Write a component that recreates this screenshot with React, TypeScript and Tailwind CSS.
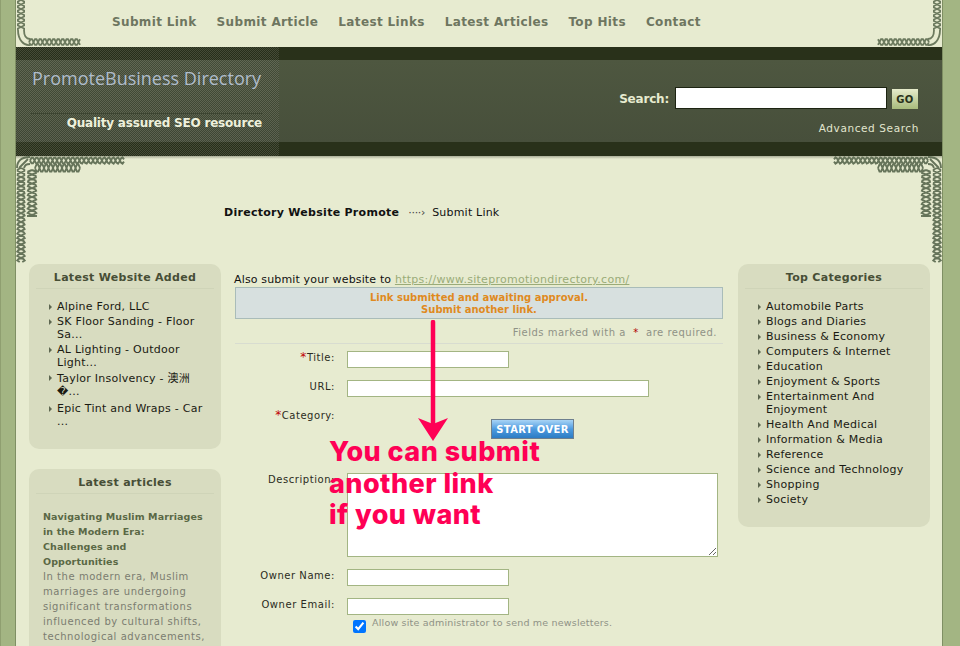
import React from "react";

function braid(x1: number, y1: number, x2: number, y2: number, amp: number, wave: number) {
  const len = Math.hypot(x2 - x1, y2 - y1);
  const ux = (x2 - x1) / len, uy = (y2 - y1) / len;
  const nx = -uy, ny = ux;
  const build = (sign: number) => {
    let d = "";
    const steps = Math.max(8, Math.round(len / 1.5));
    for (let i = 0; i <= steps; i++) {
      const t = (i / steps) * len;
      const o = Math.sin((t / wave) * Math.PI * 2) * amp * sign;
      const px = x1 + ux * t + nx * o, py = y1 + uy * t + ny * o;
      d += (i ? "L" : "M") + px.toFixed(1) + " " + py.toFixed(1);
    }
    return d;
  };
  return build(1) + build(-1);
}

function TopKnot({ flip }: { flip?: boolean }) {
  return (
    <svg width="66" height="47" viewBox="0 0 66 47" className={flip ? "absolute top-0 right-0 -scale-x-100" : "absolute top-0 left-0"}>
      <g fill="none" stroke="#6c7a5e" strokeWidth="1.8">
        <path d={braid(5, 0, 5, 30, 3.6, 9)} />
        <path d={braid(13, 42, 64, 42, 3.2, 9)} />
        <path d="M2 30 C2 40 8 46 14 45 M8 30 C8 36 10 39 14 39" />
      </g>
    </svg>
  );
}

function BottomKnot({ flip }: { flip?: boolean }) {
  return (
    <svg width="110" height="108" viewBox="0 0 110 108" className={flip ? "absolute top-0 right-0 -scale-x-100" : "absolute top-0 left-0"}>
      <g fill="none" stroke="#66745a" strokeWidth="1.9">
        <path d={braid(5, 12, 5, 106, 3.8, 9)} />
        <path d={braid(16, 14, 16, 60, 4.4, 9)} />
        <path d={braid(14, 4.5, 108, 4.5, 3.2, 9)} />
        <path d={braid(19, 12, 64, 12, 4, 9)} />
        <path d="M1 12 C1 5 5 1 14 1 M3 12 L12 3 M8 12 C9 9 10 8 14 8" />
        <path d="M11 60 L21 60" />
      </g>
    </svg>
  );
}

function Caret() {
  return <span className="absolute left-[-8px] top-[4px] w-0 h-0 border-y-[3px] border-y-transparent border-l-[3px] border-l-[#5d6650]" />;
}

function Panel({ title, children, className }: { title: string; children: React.ReactNode; className: string }) {
  return (
    <div className={"w-[192px] rounded-[10px] bg-[#d8dcc0] " + className}>
      <h3 className="mx-[7px] h-[25px] border-b border-[#cfd4b8] pt-[6px] text-center text-[11px] leading-[15px] font-bold tracking-[0.3px] text-[#474e36]">{title}</h3>
      {children}
    </div>
  );
}

const latest = [
  ["Alpine Ford, LLC"],
  ["SK Floor Sanding - Floor", "Sa..."],
  ["AL Lighting - Outdoor", "Light..."],
  ["Taylor Insolvency - 澳洲", "�..."],
  ["Epic Tint and Wraps - Car", "..."],
];

const cats = [
  ["Automobile Parts"], ["Blogs and Diaries"], ["Business & Economy"], ["Computers & Internet"], ["Education"],
  ["Enjoyment & Sports"], ["Entertainment And", "Enjoyment"], ["Health And Medical"], ["Information & Media"],
  ["Reference"], ["Science and Technology"], ["Shopping"], ["Society"],
];

function Links({ items }: { items: string[][] }) {
  return (
    <ul className="ml-[28px] mt-[11px] text-[11px] tracking-[0.25px] text-[#1a1a12]">
      {items.map((it) => (
        <li key={it[0]} className={"relative leading-[13px] " + (it[0].startsWith("Taylor") ? "pt-[1px] pb-[4px]" : "pb-[2px]")}>
          <Caret />
          {it.map((l) => <div key={l} className="whitespace-nowrap">{l}</div>)}
        </li>
      ))}
    </ul>
  );
}

const inputCls = "block h-[17px] border border-[#a3b583] bg-white";

function Row({ label, req, className, children }: { label: string; req?: boolean; className: string; children?: React.ReactNode }) {
  return (
    <div className={"flex " + className}>
      <label className="w-[100px] shrink-0 text-right text-[10px] leading-[13px] tracking-[0.55px] text-[#2b2b22] whitespace-nowrap">
        {req && <span className="text-[12px] text-[#c00000]">*</span>}{label}
      </label>
      <div className="ml-[12px]">{children}</div>
    </div>
  );
}

export default function App() {
  return (
    <div className="relative w-[960px] h-[646px] overflow-hidden flex bg-[#a3b583] font-['DejaVu_Sans','Noto_Sans_CJK_SC',sans-serif]">
      <div className="w-[16px] shrink-0 border-l border-r border-l-[#8f9f70] border-r-[#7f8f64]" />
      <div className="relative w-[926px] shrink-0 bg-[#e7ebd0]">
        <nav className="relative h-[47px]">
          <TopKnot />
          <TopKnot flip />
          <ul className="flex gap-[20px] pl-[96px] pt-[14px] text-[12px] leading-[16px] font-bold tracking-[0.36px] text-[#6e7660]">
            {["Submit Link", "Submit Article", "Latest Links", "Latest Articles", "Top Hits", "Contact"].map((t) => <li key={t}>{t}</li>)}
          </ul>
        </nav>

        <header className="relative h-[109px] bg-[#29311a]">
          <div className="h-[13px]" />
          <div className="h-[82px] bg-gradient-to-b from-[#4e5740] to-[#474f3b] relative flex justify-end">
            <div className="relative mt-[27px] mr-[24px] w-[320px]">
              <div className="flex items-start justify-end">
                <span className="text-[12px] leading-[24px] font-bold tracking-[-0.2px] text-[#e7ebd0]">Search:</span>
                <input className="ml-[6px] w-[212px] shrink-0 h-[22px] bg-white border border-[#1d2412]" aria-label="Search" />
                <button className="ml-[5px] mt-[2px] w-[26px] shrink-0 h-[20px] bg-gradient-to-b from-[#e6ebcb] to-[#a8bb7c] text-[10px] font-bold tracking-[0.5px] text-[#29311a]">GO</button>
              </div>
              <div className="mt-[10px] -mr-[1px] text-right text-[10.5px] leading-[14px] tracking-[0.6px] text-[#e2e6cf]">Advanced Search</div>
            </div>
          </div>
          <div className="h-[14px]" />
          <div className="absolute inset-y-0 left-0 w-[263px] opacity-25 bg-[repeating-conic-gradient(#9a9a8e_0_25%,#20281a_0_50%)] bg-[length:2px_2px]" />
          <div className="absolute left-[16px] top-[18px] text-[18px] leading-[26px] text-[#afbccb] tracking-[0px] font-['Open_Sans',sans-serif] whitespace-nowrap">PromoteBusiness Directory</div>
          <div className="absolute left-[15px] top-[66px] w-[231px] border-t border-dotted border-[#3a4230] text-right text-[12px] leading-[16px] pt-[1px] font-bold tracking-[-0.2px] text-[#eef1dc]">Quality assured SEO resource</div>
          <div className="absolute left-0 right-0 -bottom-[3px] h-[3px] bg-gradient-to-b from-[#a9ad97] to-[#e7ebd0]" />
        </header>

        <div className="relative">
          <BottomKnot />
          <BottomKnot flip />
          <div className="pl-[208px] pt-[50px] h-[108px] text-[11px] leading-[14px] text-[#111]">
            <b className="tracking-[0.28px]">Directory Website Promote</b>
            <span className="ml-[9px] mr-[7px] text-[#444] tracking-[-0.3px]">····›</span>
            <span className="tracking-[0.2px]">Submit Link</span>
          </div>
          <div className="flex">
            <aside className="ml-[13px] w-[192px]">
              <Panel title="Latest Website Added" className="h-[185px]">
                <Links items={latest} />
              </Panel>
              <Panel title="Latest articles" className="mt-[20px] h-[300px]">
                <div className="mx-[14px] mt-[15px] text-[10px] leading-[15px] tracking-[0.55px]">
                  <b className="block text-[9.5px] tracking-[0.1px] whitespace-nowrap text-[#5a6845]">Navigating Muslim Marriages<br />in the Modern Era:<br />Challenges and<br />Opportunities</b>
                  <p className="text-[#7b7d70]">In the modern era, Muslim marriages are undergoing significant transformations influenced by cultural shifts, technological advancements,</p>
                </div>
              </Panel>
            </aside>

            <main className="ml-[14px] w-[488px] text-[11px]">
              <p className="ml-[-1px] mt-[9px] leading-[14px] text-[#111] tracking-[0.15px] whitespace-nowrap">Also submit your website to <span className="underline tracking-[0.28px] text-[#9aab78]">https://www.sitepromotiondirectory.com/</span></p>
              <div className="h-[32px] border border-[#a9bcb9] bg-[#d7e0df] pt-[4px] text-center text-[10px] leading-[12px] font-bold text-[#e08a1e]">
                Link submitted and awaiting approval.<br />Submit another link.
              </div>
              <p className="mt-[7px] pr-[6px] h-[17px] text-right text-[10px] leading-[14px] tracking-[0.5px] text-[#8f9286]">Fields marked with a &nbsp;<span className="text-[#b00000]">*</span>&nbsp; are required.</p>
              <div className="border-t border-[#d8dcd0]" />
              <Row label="Title:" req className="mt-[7px] h-[17px]"><input className={inputCls + " w-[162px]"} aria-label="Title" /></Row>
              <Row label="URL:" className="mt-[12px] h-[17px]"><input className={inputCls + " w-[302px]"} aria-label="URL" /></Row>
              <Row label="Category:" req className="mt-[12px] h-[22px]">
                <button className="ml-[144px] mt-[10px] block w-[83px] h-[20px] border border-[#6e7f8e] bg-gradient-to-b from-[#a8d4f5] via-[#4d9be0] to-[#2c7cc4] text-[10px] leading-[20px] font-bold tracking-[0.35px] text-white whitespace-nowrap">START OVER</button>
              </Row>
              <Row label="Description:" className="mt-[42px] h-[84px]">
                <textarea className="block w-[371px] h-[84px] border border-[#a3b583] bg-white" aria-label="Description" />
              </Row>
              <Row label="Owner Name:" className="mt-[12px] h-[17px]"><input className={inputCls + " w-[162px]"} aria-label="Owner Name" /></Row>
              <Row label="Owner Email:" className="mt-[12px] h-[17px]"><input className={inputCls + " w-[162px]"} aria-label="Owner Email" /></Row>
              <div className="ml-[118px] mt-[4px] flex items-start">
                <input type="checkbox" defaultChecked className="mt-[1px] w-[13px] h-[13px] accent-[#0075ff]" aria-label="Newsletters" />
                <span className="ml-[6px] -mt-[2px] text-[9.5px] leading-[12px] tracking-[0.2px] text-[#8f9286] whitespace-nowrap">Allow site administrator to send me newsletters.</span>
              </div>
            </main>

            <aside className="ml-[15px] w-[192px]">
              <Panel title="Top Categories" className="h-[263px]">
                <Links items={cats} />
              </Panel>
            </aside>
          </div>
        </div>
      </div>
      <div className="flex-1 border-l border-[#7f8f64]" />

      <svg width="40" height="125" viewBox="0 0 40 125" className="absolute left-[413px] top-[320px]">
        <path d="M20 2 V104" stroke="#ff0055" strokeWidth="4.5" strokeLinecap="round" />
        <path d="M5 98 L20 104 L35 98 L20 121 Z" fill="#ff0055" />
      </svg>
      <div className="absolute left-[329px] top-[436px] text-[27px] leading-[31.5px] font-extrabold tracking-[0.45px] text-[#ff0055] font-['Inter',sans-serif] whitespace-nowrap">
        You can submit<br />another link<br />if you want
      </div>
    </div>
  );
}
